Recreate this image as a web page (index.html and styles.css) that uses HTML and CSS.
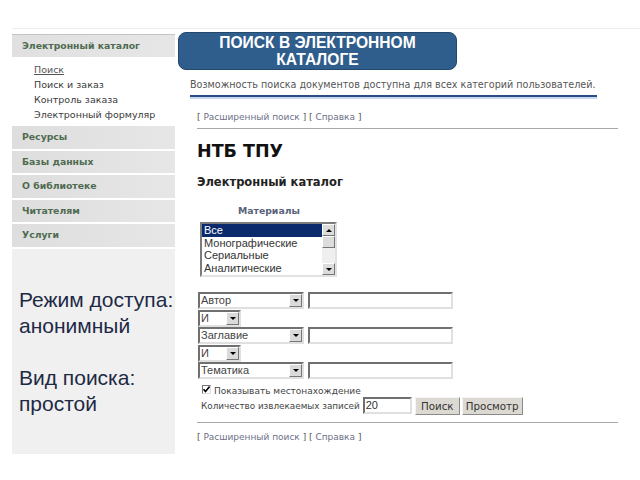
FILE: index.html
```html
<!DOCTYPE html>
<html lang="ru">
<head>
<meta charset="utf-8">
<title>Поиск в электронном каталоге</title>
<link rel="stylesheet" href="styles.css">
</head>
<body>
<div class="topline"></div>
<div class="page">
  <aside class="sidebar">
    <div class="cat-head">Электронный каталог</div>
    <ul class="submenu">
      <li><a class="cur">Поиск</a></li>
      <li>Поиск и заказ</li>
      <li>Контроль заказа</li>
      <li>Электронный формуляр</li>
    </ul>
    <div class="band">Ресурсы</div>
    <div class="band">Базы данных</div>
    <div class="band">О библиотеке</div>
    <div class="band">Читателям</div>
    <div class="band">Услуги</div>
    <div class="panel">
      <p>Режим доступа:<br>анонимный</p>
      <p>Вид поиска:<br>простой</p>
    </div>
  </aside>
  <main class="main">
    <div class="desc">Возможность поиска документов доступна для всех категорий пользователей.</div>
    <div class="content">
      <div class="links">[ <a>Расширенный поиск</a> ] [ <a>Справка</a> ]</div>
      <h1 class="org">НТБ ТПУ</h1>
      <h2 class="cat">Электронный каталог</h2>
      <div class="mat-label">Материалы</div>
      <div class="listbox">
        <div class="opts">
          <div class="opt sel-opt">Все</div>
          <div class="opt">Монографические</div>
          <div class="opt">Сериальные</div>
          <div class="opt">Аналитические</div>
        </div>
        <div class="vscroll">
          <div class="sbtn"><span class="tri-up"></span></div>
          <div class="thumb"></div>
          <div class="track"></div>
          <div class="sbtn"><span class="tri-down"></span></div>
        </div>
      </div>
      <div class="query">
        <div class="qrow"><div class="sel wide"><span>Автор</span><i class="dd"><b></b></i></div><div class="inp"></div></div>
        <div class="qrow"><div class="sel narrow"><span>И</span><i class="dd"><b></b></i></div></div>
        <div class="qrow"><div class="sel wide"><span>Заглавие</span><i class="dd"><b></b></i></div><div class="inp"></div></div>
        <div class="qrow"><div class="sel narrow"><span>И</span><i class="dd"><b></b></i></div></div>
        <div class="qrow"><div class="sel wide"><span>Тематика</span><i class="dd"><b></b></i></div><div class="inp"></div></div>
      </div>
      <div class="chk-row"><span class="chk"><svg width="9" height="9" viewBox="0 0 9 9"><path d="M1.5 4.2 L3.5 6.5 L7.6 1.6" fill="none" stroke="#000" stroke-width="1.6"/></svg></span>Показывать местонахождение</div>
      <div class="count-row">
        <span>Количество извлекаемых записей</span>
        <div class="inp small">20</div>
        <div class="btn b1">Поиск</div>
        <div class="btn b2">Просмотр</div>
      </div>
      <div class="links bottom">[ <a>Расширенный поиск</a> ] [ <a>Справка</a> ]</div>
    </div>
  </main>
</div>
<div class="banner">ПОИСК В ЭЛЕКТРОННОМ<br>КАТАЛОГЕ</div>
</body>
</html>
```

FILE: styles.css
```css
* { box-sizing: border-box; }
html, body { margin: 0; padding: 0; }
body {
  width: 640px;
  height: 480px;
  background: #fff;
  position: relative;
  overflow: hidden;
  font-family: "DejaVu Sans", Verdana, sans-serif;
  color: #333;
}
.topline {
  margin: 28px 0 0 12px;
  height: 1px;
  background: #ececec;
}
.page {
  display: flex;
  padding: 5px 0 0 12px;
}
.sidebar {
  width: 163px;
  flex: none;
}
.cat-head {
  border-top: 1px solid #c4c4c4;
  background: linear-gradient(to right, #e0e0e0, #e6e6e6);
  height: 23px;
  line-height: 22px;
  padding-left: 10px;
  font-size: 9.3px;
  font-weight: bold;
  color: #4e6b50;
}
.submenu {
  list-style: none;
  margin: 0;
  padding: 5px 0 4px 22px;
  font-size: 9.5px;
  line-height: 15px;
  color: #3a3a3a;
}
.submenu .cur {
  text-decoration: underline;
  color: #555;
}
.band {
  height: 22.5px;
  line-height: 22px;
  margin-bottom: 2px;
  padding-left: 10px;
  background: linear-gradient(to right, #dedede, #e6e6e6);
  font-size: 9.3px;
  font-weight: bold;
  color: #4e6b50;
}
.panel {
  margin-top: 1px;
  height: 205px;
  background: #f0f0f0;
  padding: 38px 0 0 7px;
  font-family: "Liberation Sans", Arial, sans-serif;
  font-size: 21px;
  line-height: 26px;
  color: #1e2a45;
}
.panel p { margin: 0 0 26px; white-space: nowrap; }
.main {
  margin-left: 15px;
  width: 430px;
  padding-top: 44px;
}
.desc {
  width: 407px;
  font-size: 9.6px;
  color: #555;
  line-height: 14px;
  padding-bottom: 3px;
  border-bottom: 2px solid #2b4d85;
  box-shadow: 0 2px 0 #c9d8ee;
  white-space: nowrap;
}
.content {
  padding-left: 7px;
}
.links {
  margin-top: 13px;
  font-size: 9px;
  line-height: 14px;
  color: #555;
  width: 421px;
  padding-bottom: 4px;
  border-bottom: 1px solid #a8a8a8;
}
.links a { color: #6e7088; }
.org {
  margin: 12px 0 0;
  font-size: 17.5px;
  line-height: 20px;
  font-weight: bold;
  color: #111;
}
.cat {
  margin: 14px 0 0;
  font-size: 11.5px;
  line-height: 14px;
  font-weight: bold;
  color: #222;
}
.mat-label {
  margin: 16px 0 0 41px;
  font-size: 9.3px;
  line-height: 12px;
  font-weight: bold;
  color: #59627a;
}
.listbox {
  margin: 5px 0 0 3px;
  width: 137px;
  height: 55px;
  display: flex;
  border-style: solid;
  border-width: 2px;
  border-color: #7c7c7c #e2e2e2 #e2e2e2 #7c7c7c;
  background: #fff;
  font-family: "Liberation Sans", Arial, sans-serif;
  font-size: 11px;
  color: #333;
}
.opts { flex: 1; }
.opt {
  height: 12.7px;
  line-height: 12.7px;
  padding-left: 2px;
  white-space: nowrap;
  overflow: hidden;
}
.sel-opt {
  background: #0b2a6e;
  color: #fff;
}
.vscroll {
  width: 13px;
  display: flex;
  flex-direction: column;
  background: #eeeeee;
}
.sbtn {
  height: 12px;
  background: #dcdcdc;
  border-style: solid;
  border-width: 1px;
  border-color: #fff #777 #777 #fff;
  display: flex;
  align-items: center;
  justify-content: center;
}
.thumb {
  height: 12px;
  background: #dcdcdc;
  border-style: solid;
  border-width: 1px;
  border-color: #fff #777 #777 #fff;
}
.track { flex: 1; background: #efefef; }
.tri-up, .tri-down, .dd b {
  width: 0; height: 0;
  border-left: 3px solid transparent;
  border-right: 3px solid transparent;
}
.tri-up { border-bottom: 3px solid #000; }
.tri-down, .dd b { border-top: 3px solid #000; }
.query {
  margin-top: 15px;
  display: flex;
  flex-direction: column;
}
.qrow {
  display: flex;
  gap: 4px;
  height: 17.5px;
}
.sel {
  height: 17px;
  display: flex;
  align-items: stretch;
  border-style: solid;
  border-width: 2px;
  border-color: #707070 #e0e0e0 #e0e0e0 #707070;
  background: #fff;
  font-family: "Liberation Sans", Arial, sans-serif;
  font-size: 11px;
  color: #444;
  margin-left: 1px;
}
.sel span {
  flex: 1;
  line-height: 13px;
  padding-left: 1px;
}
.sel.wide { width: 106px; }
.sel.narrow { width: 43px; }
.dd {
  width: 13px;
  background: #dadada;
  border-style: solid;
  border-width: 1px;
  border-color: #fff #777 #777 #fff;
  display: flex;
  align-items: center;
  justify-content: center;
}
.inp {
  width: 145px;
  height: 17px;
  border-style: solid;
  border-width: 2px;
  border-color: #707070 #e0e0e0 #e0e0e0 #707070;
  background: #fff;
}
.chk-row {
  margin: 5px 0 0 5px;
  display: flex;
  align-items: center;
  gap: 3px;
  font-size: 9px;
  line-height: 12px;
  color: #444;
}
.chk {
  width: 9px; height: 9px;
  display: inline-flex;
  border-style: solid;
  border-width: 1px;
  border-color: #777 #ddd #ddd #777;
  background: #fff;
  margin-top: -3px;
}
.chk svg { margin: -1px; }
.count-row {
  margin: 0 0 0 4px;
  display: flex;
  align-items: center;
  font-size: 8.8px;
  color: #444;
}
.count-row span { margin-right: 3px; }
.inp.small {
  width: 49px;
  height: 17px;
  font-family: "Liberation Sans", Arial, sans-serif;
  font-size: 11px;
  line-height: 13px;
  padding-left: 1px;
  color: #333;
}
.btn {
  height: 18px;
  line-height: 16px;
  text-align: center;
  background: #dcd9d2;
  border-style: solid;
  border-width: 1px;
  border-color: #f4f4f4 #8a8a8a #8a8a8a #f4f4f4;
  font-size: 10.3px;
  color: #333;
}
.b1 { width: 45px; margin-left: 3px; }
.b2 { width: 61px; margin-left: 2px; }
.links.bottom {
  margin-top: 7px;
  padding-top: 7px;
  border-bottom: none;
  border-top: 1px solid #a8a8a8;
}
.banner {
  position: absolute;
  left: 178px;
  top: 32px;
  width: 279px;
  height: 38px;
  border-radius: 8px;
  background: #2f5d8c;
  border: 1px solid #24476c;
  color: #fff;
  font-family: "Liberation Sans", Arial, sans-serif;
  font-weight: bold;
  font-size: 15.6px;
  line-height: 17px;
  text-align: center;
  padding-top: 1px;
}
```
